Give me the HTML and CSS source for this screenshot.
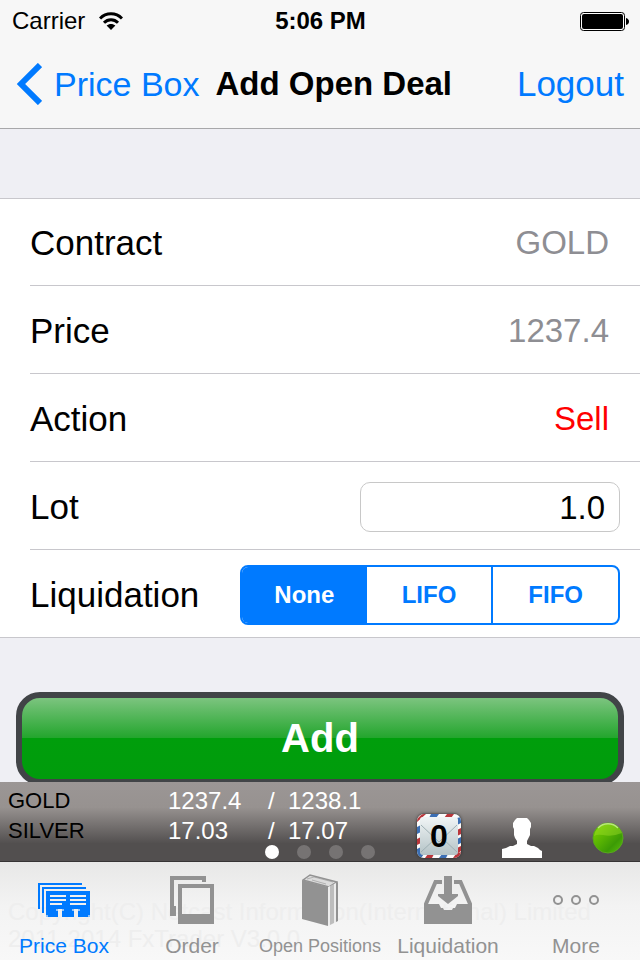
FILE: index.html
```html
<!DOCTYPE html>
<html lang="en">
<head>
    <meta charset="UTF-8">
    <meta name="viewport" content="width=device-width, initial-scale=1.0">
    <title>Add Open Deal</title>
    <link rel="stylesheet" href="styles.css">
</head>
<body>
    <header class="header">
        <div class="status">
            <div class="carrier">
                <span>Carrier</span>
                <svg width="24" height="18" viewBox="0 0 24 18" fill="none" stroke="#000" stroke-width="3">
                    <path d="M1 6.5C7 0.2 17 0.2 23 6.5"/>
                    <path d="M5 10.8C9 6.8 15 6.8 19 10.8"/>
                    <path d="M12 18L7.6 13.6C10 11.4 14 11.4 16.4 13.6Z" fill="#000" stroke="none"/>
                </svg>
            </div>
            <span class="time">5:06 PM</span>
            <svg class="battery" width="49" height="19" viewBox="0 0 49 19">
                <rect x="0.5" y="0.5" width="44" height="18" rx="3" fill="#fff" stroke="#000"/>
                <rect x="2" y="2" width="41" height="15" rx="2" fill="#000"/>
                <path d="M46 6q3 1 3 3.500t-3 3.500z" fill="#000"/>
            </svg>
        </div>
        <nav class="navbar">
            <a class="back" href="#">
                <svg width="26" height="42" viewBox="0 0 26 42" fill="none" stroke="#007aff" stroke-width="6">
                    <path d="M24 2L5 21L24 40"/>
                </svg>
                <span>Price Box</span>
            </a>
            <h1 class="title">Add Open Deal</h1>
            <button class="logout" type="button">Logout</button>
        </nav>
    </header>

    <main class="content">
        <form class="deal">
            <div class="rows">
                <div class="row">
                    <span class="label">Contract</span>
                    <span class="value">GOLD</span>
                </div>
                <div class="row">
                    <span class="label">Price</span>
                    <span class="value">1237.4</span>
                </div>
                <div class="row">
                    <span class="label">Action</span>
                    <span class="value sell">Sell</span>
                </div>
                <div class="row">
                    <label class="label" for="lot">Lot</label>
                    <input class="lot" type="text" id="lot" value="1.0">
                </div>
                <div class="row">
                    <span class="label" id="liq-label">Liquidation</span>
                    <div class="segments" role="radiogroup" aria-labelledby="liq-label">
                        <label class="segment"><input type="radio" name="liq" checked><span>None</span></label>
                        <label class="segment"><input type="radio" name="liq"><span>LIFO</span></label>
                        <label class="segment"><input type="radio" name="liq"><span>FIFO</span></label>
                    </div>
                </div>
            </div>
            <button class="add" type="button">Add</button>
        </form>
    </main>

    <section class="ticker">
        <table class="prices">
            <tr><th>GOLD</th><td class="bid">1237.4</td><td class="slash">/</td><td>1238.1</td></tr>
            <tr><th>SILVER</th><td class="bid">17.03</td><td class="slash">/</td><td>17.07</td></tr>
        </table>
        <div class="tools">
            <button class="mail" type="button" aria-label="Messages">
                <svg width="44" height="44" viewBox="0 0 44 44">
                    <defs>
                        <clipPath id="stamp"><rect width="44" height="44" rx="7"/></clipPath>
                        <linearGradient id="paper" x1="0" y1="0" x2="0" y2="1">
                            <stop offset="0" stop-color="#f1f5f6"/>
                            <stop offset="1" stop-color="#b4c3c6"/>
                        </linearGradient>
                    </defs>
                    <g clip-path="url(#stamp)">
                        <rect width="44" height="44" fill="#fbfbfb"/>
                        <path d="M0 5L5 0H9L0 8ZM30 0H37L34 4H27ZM44 14V20L40 22V16ZM44 32V37L40 40V34ZM8 44L11 40H17L15 44ZM36 44L39 40L44 38V44ZM0 25L4 23V29L0 31Z" fill="#b9363b"/>
                        <path d="M14 0H22L19 4H12ZM40 4L44 3V9L40 11ZM44 23V29L40 31V25ZM22 44L25 40H31L29 44ZM0 13L4 11V18L0 20ZM0 35L4 33V37L7 40L4 44H0Z" fill="#3c6fb4"/>
                        <rect x="3" y="3" width="38" height="38" rx="3" fill="url(#paper)"/>
                        <path d="M4 38L18 25M40 38L26 25M4 11L22 28L40 11" fill="none" stroke="#9fb0b4"/>
                    </g>
                </svg>
                <span class="count">0</span>
            </button>
            <svg width="40" height="40" viewBox="0 0 40 40" fill="#fff">
                <path d="M15 0H25L27 2L29 5V9L28 11V17L26 21L25 23V26L29 28H32L36 30L38 32L40 33V40H0V31L4 30L8 28H11L15 26V23L13 20L12 17V11L11 9V5L13 2Z"/>
            </svg>
            <svg class="online" width="32" height="34" viewBox="0 0 32 34">
                <defs>
                    <linearGradient id="lamp" x1="0" y1="0" x2="1" y2="1">
                        <stop offset="0.1" stop-color="#79d000"/>
                        <stop offset="0.7" stop-color="#3c9b05"/>
                        <stop offset="1" stop-color="#5cc00c"/>
                    </linearGradient>
                </defs>
                <circle cx="16" cy="17" r="15" fill="url(#lamp)" stroke="#58a91c" stroke-width="1"/>
                <path d="M2 15A14.500 14.500 0 0 1 30 12Q20 16 11 14Q5 13 2 15Z" fill="#a5e02c" opacity="0.4"/>
                <path d="M6 7A14 14 0 0 1 26 7" fill="none" stroke="#b9e67c" stroke-width="1.500"/>
            </svg>
        </div>
        <div class="dots">
            <span class="dot current"></span>
            <span class="dot"></span>
            <span class="dot"></span>
            <span class="dot"></span>
        </div>
    </section>

    <nav class="tabbar">
        <p class="copyright">Copyright(C) Netcast Information(International) Limited<br>2011-2014 FxTrader V3.0.0</p>
        <a class="tab active" href="#">
            <svg width="52" height="52" viewBox="0 0 52 52" fill="currentColor" shape-rendering="crispEdges">
                <path d="M0 9H44V11H2V35H0ZM4 13H48V15H6V39H4ZM8 17H52V43H8Z"/>
                <path d="M12 21H28V23H12ZM12 25H28V27H12ZM12 29H24V31H12ZM32 21H48V23H32ZM32 25H48V27H32ZM32 29H48V31H32ZM20 35H24V43H20ZM36 35H40V43H36Z" fill="#f0f0f0"/>
                <path d="M18 35H20V37H18ZM24 35H26V37H24ZM34 35H36V37H34ZM40 35H42V37H40ZM8 41H10V43H8ZM50 41H52V43H50Z" fill="#8ec2fa"/>
            </svg>
            <span>Price Box</span>
        </a>
        <a class="tab" href="#">
            <svg width="44" height="52" viewBox="0 0 44 52" fill="currentColor" shape-rendering="crispEdges">
                <path d="M0 2H36V8H32V6H4V32H6V42H0Z"/>
                <path d="M8 10H44V50H8ZM12 14V40H40V14Z" fill-rule="evenodd"/>
            </svg>
            <span>Order</span>
        </a>
        <a class="tab" href="#">
            <svg width="36" height="52" viewBox="0 0 36 52" fill="currentColor">
                <path d="M1 6L8 1L35 8L27 13Z" fill="#dcdcdc" stroke="currentColor" stroke-width="1.500"/>
                <path d="M5 5L12 3L31 8M10 6L24 10" fill="none" stroke="currentColor" opacity="0.6"/>
                <path d="M0 6L26 13V52L0 45Z"/>
                <path d="M26 13L28 12V51L26 52Z" fill="#ececec"/>
                <path d="M28 12L32 10V49L28 51Z" fill="#bdbdbd"/>
                <path d="M32 10L34 9V48L32 49Z" fill="#ececec"/>
                <path d="M34 9L36 8V47L34 48Z"/>
            </svg>
            <span class="long">Open Positions</span>
        </a>
        <a class="tab" href="#">
            <svg width="48" height="52" viewBox="0 0 48 52" fill="currentColor">
                <path d="M20 2H28V20H34V22L24 30L14 22V20H20Z"/>
                <path d="M0 30H15L17 34H19L20 36H28L29 34H31L33 30H48V50H0Z"/>
                <path d="M1.500 31L11.500 8H18M46.500 31L36.500 8H30" fill="none" stroke="currentColor" stroke-width="4"/>
            </svg>
            <span>Liquidation</span>
        </a>
        <a class="tab" href="#">
            <svg width="46" height="52" viewBox="0 0 46 52" fill="none" stroke="currentColor" stroke-width="2">
                <circle cx="5" cy="26" r="4"/>
                <circle cx="23" cy="26" r="4"/>
                <circle cx="41" cy="26" r="4"/>
            </svg>
            <span>More</span>
        </a>
    </nav>
</body>
</html>
```
FILE: styles.css
```css
* {
    box-sizing: border-box;
}

body {
    margin: 0;
    height: 100vh;
    display: flex;
    flex-direction: column;
    font-family: "Liberation Sans", Arial, sans-serif;
    color: #000;
    background-color: #efeff4;
}

a {
    text-decoration: none;
}

button {
    padding: 0;
    border: none;
    background: none;
    font-family: inherit;
    cursor: pointer;
}

svg {
    display: block;
    flex-shrink: 0;
}

/* status bar + navigation */
.header {
    background-color: #f7f7f7;
    border-bottom: 1px solid #a8a8aa;
}

.status {
    display: grid;
    grid-template-columns: 1fr auto 1fr;
    align-items: center;
    height: 40px;
    padding: 2px 11px 0 12px;
    font-size: 24px;
}

.carrier {
    display: flex;
    align-items: center;
    gap: 14px;
}

.time {
    font-weight: bold;
}

.battery {
    justify-self: end;
}

.navbar {
    display: flex;
    align-items: center;
    height: 88px;
    padding: 0 16px;
    font-size: 34px;
}

.back {
    display: flex;
    align-items: center;
    gap: 12px;
    color: #007aff;
}

.title {
    margin: 0 0 0 16px;
    font-size: 33px;
    font-weight: bold;
}

.logout {
    margin-left: auto;
    font-size: 35px;
    color: #007aff;
}

/* form */
.content {
    flex: 1;
    min-height: 0;
    overflow: hidden;
    padding-top: 69px;
}

.rows {
    background-color: #fff;
    border-top: 1px solid #c8c7cc;
    border-bottom: 1px solid #c8c7cc;
}

.row {
    display: flex;
    align-items: center;
    justify-content: space-between;
    height: 88px;
    margin-left: 30px;
    padding: 2px 20px 0 0;
    border-bottom: 1px solid #c8c7cc;
}

.row:first-child {
    height: 87px;
}

.row:last-child {
    height: 87px;
    border-bottom: none;
}

.label {
    font-size: 35px;
}

.value {
    padding-right: 11px;
    font-size: 33px;
    color: #8e8e93;
}

.sell {
    color: #f00;
}

.lot {
    width: 260px;
    height: 50px;
    padding: 2px 14px 0;
    border: 1px solid #c8c8c8;
    border-radius: 10px;
    background-color: #fff;
    font-family: inherit;
    font-size: 33px;
    text-align: right;
}

.segments {
    display: flex;
    width: 380px;
    height: 60px;
    border: 2px solid #007aff;
    border-radius: 8px;
    overflow: hidden;
}

.segment {
    position: relative;
    flex: 1;
    display: flex;
    font-size: 24px;
    font-weight: bold;
    color: #007aff;
}

.segment:last-child {
    border-left: 2px solid #007aff;
}

.segment input {
    position: absolute;
    opacity: 0;
}

.segment span {
    flex: 1;
    display: flex;
    align-items: center;
    justify-content: center;
}

.segment input:checked + span {
    background-color: #007aff;
    color: #fff;
}

.add {
    display: block;
    width: calc(100% - 32px);
    height: 93px;
    margin: 54px 16px 0;
    border: 6px solid #414447;
    border-radius: 24px;
    background: linear-gradient(#7cc47f, #22a52c 50%, #009e0c 50%, #009c0c);
    background-origin: padding-box;
    font-size: 40px;
    font-weight: bold;
    color: #fff;
}

/* price ticker */
.ticker {
    position: relative;
    display: flex;
    justify-content: space-between;
    height: 80px;
    padding: 4px 16px 3px 8px;
    border-bottom: 1px solid #363434;
    background: linear-gradient(#9b9695, #979290 32%, #524f4f 78%, #524f4f);
}

.prices {
    align-self: flex-start;
    border-collapse: collapse;
    font-size: 24px;
    line-height: 30px;
    color: #fff;
}

.prices th {
    width: 160px;
    padding: 0;
    font-size: 22px;
    font-weight: normal;
    text-align: left;
    color: #000;
}

.prices td {
    padding: 0;
}

.prices .bid {
    width: 100px;
}

.prices .slash {
    width: 20px;
}

.tools {
    display: flex;
    align-items: flex-end;
    gap: 41px;
}

.mail {
    position: relative;
    border-radius: 7px;
    box-shadow: 0 0 3px #222;
}

.count {
    position: absolute;
    inset: 0;
    font-size: 32px;
    font-weight: bold;
    line-height: 44px;
}

.online {
    margin-left: 9px;
    margin-bottom: 3px;
}

.dots {
    position: absolute;
    left: 0;
    right: 0;
    bottom: 2px;
    display: flex;
    justify-content: center;
    gap: 18px;
    pointer-events: none;
}

.dot {
    width: 14px;
    height: 14px;
    border-radius: 50%;
    background-color: #767373;
}

.dot.current {
    background-color: #fff;
}

/* tabs */
.tabbar {
    position: relative;
    display: flex;
    height: 98px;
    padding-top: 12px;
    background: linear-gradient(#e8e8e7, #f3f3f3 45%, #f8f8f8);
}

/* footer text showing faintly through the bar */
.copyright {
    position: absolute;
    top: 36px;
    left: 8px;
    margin: 0;
    font-size: 24px;
    line-height: 27px;
    white-space: nowrap;
    color: #eeeeee;
}

.tab {
    position: relative;
    flex: 1 1 0;
    min-width: 0;
    display: flex;
    flex-direction: column;
    align-items: center;
    gap: 8px;
    font-size: 21px;
    line-height: 24px;
    white-space: nowrap;
    color: #929292;
}

.tab.active {
    color: #007aff;
}

.tab .long {
    font-size: 18px;
}
```
